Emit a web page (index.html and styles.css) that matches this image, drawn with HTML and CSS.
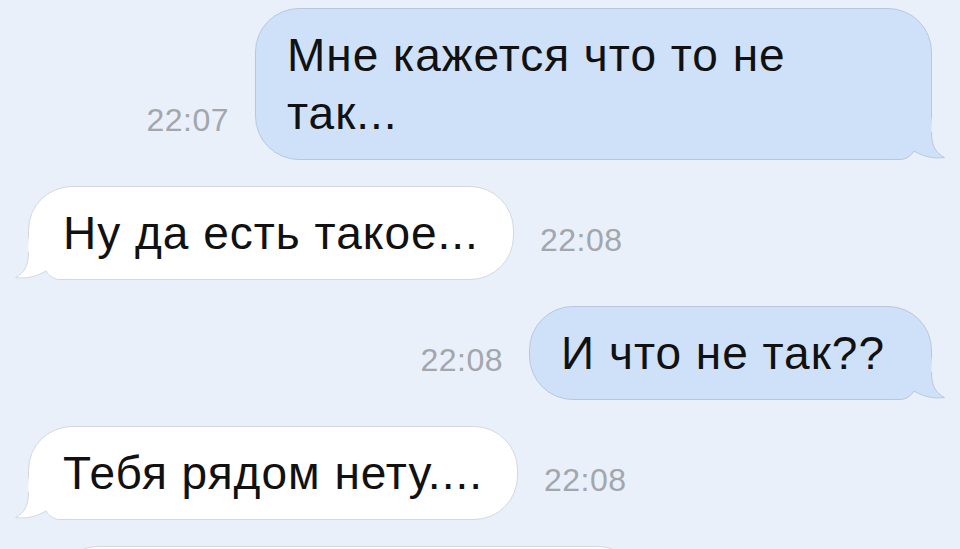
FILE: index.html
```html
<!DOCTYPE html>
<html lang="ru">

<head>
  <meta charset="UTF-8">
  <meta name="viewport" content="width=device-width, initial-scale=1.0">
  <title>Сообщения</title>
  <link rel="stylesheet" href="styles.css">
</head>

<body>
  <div class="chat">

    <div class="row out">
      <span class="time">22:07</span>
      <div class="bubble blue wide">
        <span class="text">Мне кажется что то не<br>так...</span>
        <svg class="tail" viewBox="0 0 56 42"><path class="tail-fill" d="M0 0 H41.5 V14 C41.5 28 46 35 54.5 39.5 C45 41 34 39 24 33 C21 38 16 41.5 10 41.5 H0 Z"/><path class="tail-line" d="M0 41.5 H10 C16 41.5 21 38 24 33 C34 39 45 41 54.5 39.5 C46 35 41.5 28 41.5 14"/></svg>
      </div>
    </div>

    <div class="row in">
      <div class="bubble white">
        <span class="text">Ну да есть такое...</span>
        <svg class="tail" viewBox="0 0 56 42"><path class="tail-fill" d="M0 0 H41.5 V14 C41.5 28 46 35 54.5 39.5 C45 41 34 39 24 33 C21 38 16 41.5 10 41.5 H0 Z"/><path class="tail-line" d="M0 41.5 H10 C16 41.5 21 38 24 33 C34 39 45 41 54.5 39.5 C46 35 41.5 28 41.5 14"/></svg>
      </div>
      <span class="time">22:08</span>
    </div>

    <div class="row out">
      <span class="time">22:08</span>
      <div class="bubble blue">
        <span class="text">И что не так??</span>
        <svg class="tail" viewBox="0 0 56 42"><path class="tail-fill" d="M0 0 H41.5 V14 C41.5 28 46 35 54.5 39.5 C45 41 34 39 24 33 C21 38 16 41.5 10 41.5 H0 Z"/><path class="tail-line" d="M0 41.5 H10 C16 41.5 21 38 24 33 C34 39 45 41 54.5 39.5 C46 35 41.5 28 41.5 14"/></svg>
      </div>
    </div>

    <div class="row in">
      <div class="bubble white">
        <span class="text">Тебя рядом нету....</span>
        <svg class="tail" viewBox="0 0 56 42"><path class="tail-fill" d="M0 0 H41.5 V14 C41.5 28 46 35 54.5 39.5 C45 41 34 39 24 33 C21 38 16 41.5 10 41.5 H0 Z"/><path class="tail-line" d="M0 41.5 H10 C16 41.5 21 38 24 33 C34 39 45 41 54.5 39.5 C46 35 41.5 28 41.5 14"/></svg>
      </div>
      <span class="time">22:08</span>
    </div>

    <!-- следующее сообщение, обрезано снизу -->
    <div class="row in">
      <div class="bubble white next">&nbsp;</div>
    </div>

  </div>
</body>

</html>
```

FILE: styles.css
```css
* {
  box-sizing: border-box;
  margin: 0;
  padding: 0;
}

body {
  background: #eaf0f9;
  font-family: 'Liberation Sans', Arial, sans-serif;
  overflow: hidden;
}

.chat {
  display: flex;
  flex-direction: column;
  gap: 26px;
  padding: 8px 28px 0 28px;
  height: 549px;
  overflow: hidden;
}

.row {
  display: flex;
  align-items: flex-end;
  gap: 26px;
}

.out {
  justify-content: flex-end;
}

.bubble {
  position: relative;
  flex-shrink: 0;
  font-size: 46px;
  line-height: 58px;
  letter-spacing: 1px;
  color: #111;
  padding: 17px 46px 17px 31px;
  border-radius: 44px;
  border: 1px solid;
}

.in .bubble {
  padding: 17px 34px 17px 34px;
}

.text {
  position: relative;
  z-index: 1;
}

.blue {
  background: #cfe1f8;
  border-color: #b7c8de;
}

.white {
  background: #fff;
  border-color: #d3d8e0;
}

.wide {
  width: 677px;
}

.next {
  width: 588px;
  margin-left: 26px;
}

/* хвостик пузыря */
.tail {
  position: absolute;
  bottom: -1px;
  width: 56px;
  height: 42px;
  overflow: visible;
}

.out .tail {
  right: -15px;
}

.in .tail {
  left: -15px;
  transform: scaleX(-1);
}

.blue .tail-fill {
  fill: #cfe1f8;
}

.white .tail-fill {
  fill: #fff;
}

.tail-line {
  fill: none;
  stroke-width: 1;
}

.blue .tail-line {
  stroke: #b7c8de;
}

.white .tail-line {
  stroke: #d3d8e0;
}

.time {
  font-size: 32px;
  line-height: 32px;
  letter-spacing: 0.5px;
  color: #a2a6ad;
  margin-bottom: 24px;
}
```
